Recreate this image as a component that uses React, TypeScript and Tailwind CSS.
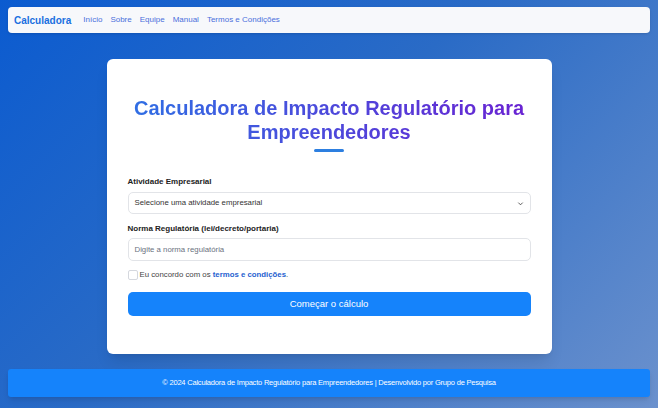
import React from "react";

const NAV_LINKS = ["Início", "Sobre", "Equipe", "Manual", "Termos e Condições"];

const App: React.FC = () => {
  return (
    <div
      className="h-[408px] w-full flex flex-col px-2 pt-[7px] pb-[11px] bg-[linear-gradient(135deg,#0b5bd0_0%,#2a6bc6_45%,#6b91cd_100%)]"
      style={{ fontFamily: '"Liberation Sans", Arial, sans-serif' }}
    >
      <nav className="h-[26px] shrink-0 rounded-[4px] bg-[#f7f8fb] shadow-sm flex items-center px-[6px] gap-[8px]">
        <span className="text-[10px] font-bold text-[#1a6fe0] mr-[4px]">Calculadora</span>
        {NAV_LINKS.map((link, i) => (
          <a key={i} href="#" className="text-[8px] text-[#4a6fdc]">
            {link}
          </a>
        ))}
      </nav>

      <main className="flex-1 flex justify-center pt-[26px]">
        <div className="w-[445px] h-[295px] rounded-[6px] bg-white shadow-lg px-[21px] pt-[37px]">
          <h1 className="text-center text-[20px] leading-[24px] font-bold bg-[linear-gradient(90deg,#2f6fe4,#6a22d2)] bg-clip-text text-transparent">
            Calculadora de Impacto Regulatório para Empreendedores
          </h1>
          <div className="mx-auto mt-[5px] h-[3px] w-[30px] rounded-full bg-[#2d7fe0]" />

          <div className="mt-[24px]">
            <label className="block text-[8px] font-bold text-[#222] leading-[11px]">
              Atividade Empresarial
            </label>
            <div className="mt-[5px] h-[22px] rounded-[5px] border border-[#e2e4e8] flex items-center justify-between px-[6px]">
              <span className="text-[7.8px] text-[#333]">Selecione uma atividade empresarial</span>
              <svg width="7" height="7" viewBox="0 0 16 16" fill="none" stroke="#444" strokeWidth="2">
                <path d="M3 6l5 5 5-5" />
              </svg>
            </div>
          </div>

          <div className="mt-[9px]">
            <label className="block text-[8px] font-bold text-[#222] leading-[11px]">
              Norma Regulatória (lei/decreto/portaria)
            </label>
            <div className="mt-[4px] h-[23px] rounded-[5px] border border-[#e2e4e8] flex items-center px-[6px]">
              <span className="text-[7.8px] text-[#6b7280]">Digite a norma regulatória</span>
            </div>
          </div>

          <div className="mt-[8px] flex items-center gap-[2px]">
            <span className="w-[10px] h-[10px] rounded-[2px] border border-[#d5d8de] bg-white" />
            <span className="text-[7.8px] text-[#444]">
              Eu concordo com os{" "}
              <a href="#" className="font-bold text-[#1f5fd0]">
                termos e condições
              </a>
              .
            </span>
          </div>

          <button className="mt-[11px] w-full h-[24px] rounded-[5px] bg-[#1583fb] text-white text-[9.5px]">
            Começar o cálculo
          </button>
        </div>
      </main>

      <footer className="h-[28px] shrink-0 rounded-[3px] bg-[#1583fb] shadow-md flex items-center justify-center">
        <span className="text-[7.5px] text-white tracking-[-0.2px]">
          © 2024 Calculadora de Impacto Regulatório para Empreendedores | Desenvolvido por Grupo de Pesquisa
        </span>
      </footer>
    </div>
  );
};

export default App;
